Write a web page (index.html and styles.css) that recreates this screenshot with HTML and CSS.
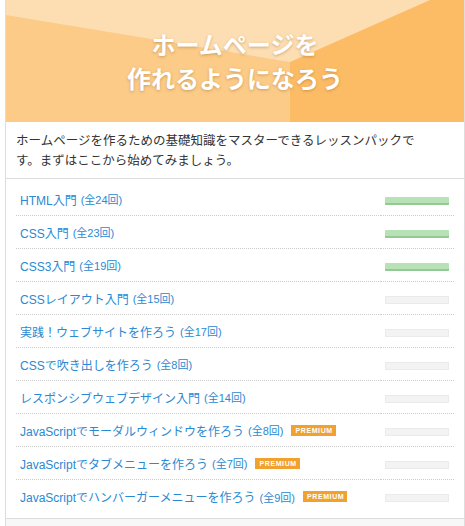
FILE: index.html
```html
<!DOCTYPE html>
<html lang="ja">
<head>
<meta charset="utf-8">
<title>ホームページを作れるようになろう</title>
<link rel="stylesheet" href="styles.css">
</head>
<body>
<div class="card">
  <header class="hero">
    <h1 class="hero-title">ホームページを<br>作れるようになろう</h1>
  </header>
  <p class="desc">ホームページを作るための基礎知識をマスターできるレッスンパックです。まずはここから始めてみましょう。</p>
  <ul class="lessons">
    <li class="lesson"><a class="name" href="#">HTML入門 <span class="count">(全24回)</span></a><span class="prog"><span class="bar done"></span></span></li>
    <li class="lesson"><a class="name" href="#">CSS入門 <span class="count">(全23回)</span></a><span class="prog"><span class="bar done"></span></span></li>
    <li class="lesson"><a class="name" href="#">CSS3入門 <span class="count">(全19回)</span></a><span class="prog"><span class="bar done"></span></span></li>
    <li class="lesson"><a class="name" href="#">CSSレイアウト入門 <span class="count">(全15回)</span></a><span class="prog"><span class="bar"></span></span></li>
    <li class="lesson"><a class="name" href="#">実践！ウェブサイトを作ろう <span class="count">(全17回)</span></a><span class="prog"><span class="bar"></span></span></li>
    <li class="lesson"><a class="name" href="#">CSSで吹き出しを作ろう <span class="count">(全8回)</span></a><span class="prog"><span class="bar"></span></span></li>
    <li class="lesson"><a class="name" href="#">レスポンシブウェブデザイン入門 <span class="count">(全14回)</span></a><span class="prog"><span class="bar"></span></span></li>
    <li class="lesson"><a class="name" href="#">JavaScriptでモーダルウィンドウを作ろう <span class="count">(全8回)</span><span class="premium">PREMIUM</span></a><span class="prog"><span class="bar"></span></span></li>
    <li class="lesson"><a class="name" href="#">JavaScriptでタブメニューを作ろう <span class="count">(全7回)</span><span class="premium">PREMIUM</span></a><span class="prog"><span class="bar"></span></span></li>
    <li class="lesson"><a class="name" href="#">JavaScriptでハンバーガーメニューを作ろう <span class="count">(全9回)</span><span class="premium">PREMIUM</span></a><span class="prog"><span class="bar"></span></span></li>
  </ul>
  <div class="card-foot"></div>
</div>
</body>
</html>
```
FILE: styles.css
```css
html, body {
  margin: 0;
  padding: 0;
  background: #fff;
}
body {
  padding-left: 5px;
  font-family: "Liberation Sans", "Noto Sans CJK JP", sans-serif;
  color: #333;
}
.card {
  width: 458px;
  border-left: 1px solid #ddd;
  border-right: 1px solid #ddd;
}
.hero {
  position: relative;
  height: 122px;
  background: #fddeb3;
  display: flex;
  align-items: center;
  justify-content: center;
  overflow: hidden;
}
.hero::before,
.hero::after {
  content: "";
  position: absolute;
  inset: 0;
}
.hero::before {
  background: #fccb88;
  clip-path: polygon(0 15px, 284px 62px, 284px 122px, 0 122px);
}
.hero::after {
  background: #fcbc66;
  clip-path: polygon(284px 62px, 424px 0, 458px 0, 458px 122px, 284px 122px);
}
.hero-title {
  position: relative;
  z-index: 1;
  margin: 0;
  font-family: "Noto Sans CJK JP", sans-serif;
  font-weight: bold;
  font-size: 24px;
  line-height: 34px;
  color: #fff;
  text-align: center;
  text-shadow: 0 1px 3px rgba(120, 70, 0, 0.35);
}
.desc {
  margin: 0;
  padding: 8px 10px 8px 10px;
  max-width: 420px;
  font-family: "Noto Sans CJK JP", sans-serif;
  font-size: 12.5px;
  line-height: 20px;
  color: #333;
}
.lessons {
  list-style: none;
  margin: 0;
  padding: 4px 10px 5px;
  border-top: 1px solid #ddd;
  border-bottom: 1px solid #ddd;
}
.lesson {
  display: grid;
  grid-template-columns: 1fr 73px;
  height: 33px;
}
.lesson > * {
  border-bottom: 1px dotted #ccc;
  display: flex;
  align-items: center;
}
.lesson:last-child > * {
  border-bottom: none;
}
.name {
  padding-left: 4px;
  font-size: 12px;
  color: #2a89d2;
  text-decoration: none;
  white-space: nowrap;
}
.count {
  font-size: 11px;
  margin-left: 4px;
}
.premium {
  margin-left: 8px;
  background: #f0a12e;
  color: #fff;
  font-size: 7px;
  font-weight: bold;
  letter-spacing: 0.6px;
  line-height: 11px;
  padding: 0 3px 0 4px;
}
.prog {
  padding-left: 4px;
}
.bar {
  display: block;
  width: 64px;
  height: 8px;
  margin-top: 3px;
  background: #f3f3f3;
  box-shadow: inset 0 0 0 1px #eaeaea;
  border-radius: 1px;
}
.bar.done {
  background: #b6e2b6;
  box-shadow: inset 0 -2px 0 #94c894;
}
.card-foot {
  height: 8px;
  background: #f7f7f7;
}
```
